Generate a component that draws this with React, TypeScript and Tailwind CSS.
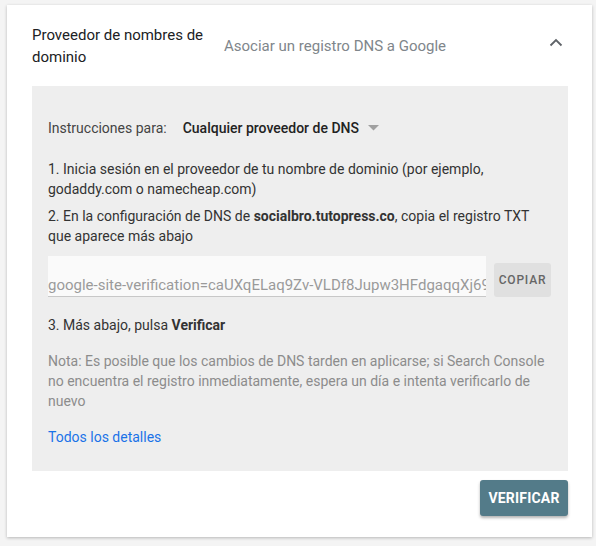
import React from 'react'

export default function App() {
  return (
    <div className="w-[596px] h-[546px] bg-[#f4f4f4] pt-[5px] pl-[7px] font-['Roboto',sans-serif]">
      <div className="w-[585px] h-[532px] bg-white shadow-[0_1px_3px_rgba(0,0,0,0.25)] pl-[25px] pr-[24px] pt-[19px]">

        {/* Header */}
        <div className="flex items-start">
          <div className="w-[192px] text-[15px] leading-[22px] text-[#202124]">
            Proveedor de nombres de dominio
          </div>
          <div className="flex-1 pt-[11px] text-[15px] leading-[22px] text-[#80868b]">
            Asociar un registro DNS a Google
          </div>
          <div className="pt-[14px] pr-[5px]">
            <svg width="14" height="9" viewBox="0 0 14 9">
              <path d="M1.5 7.5 L7 2 L12.5 7.5" stroke="#5f6368" strokeWidth="1.8" fill="none" />
            </svg>
          </div>
        </div>

        {/* Panel */}
        <div className="mt-[18px] bg-[#eeeeee] px-[16px] pt-[32px] pb-[24px] text-[14px] leading-[20px] text-[#333]">
          <div className="flex items-center">
            <span className="text-[#444]">Instrucciones para:</span>
            <span className="ml-[16px] font-medium text-[#222]">Cualquier proveedor de DNS</span>
            <svg className="ml-[9px]" width="11" height="6" viewBox="0 0 11 6">
              <path d="M0 0 L11 0 L5.5 5.5 Z" fill="#a0a0a0" />
            </svg>
          </div>

          <p className="mt-[21px]">
            1. Inicia sesión en el proveedor de tu nombre de dominio (por ejemplo, godaddy.com o namecheap.com)
          </p>
          <p className="mt-[7px]">
            2. En la configuración de DNS de <b className="font-bold">socialbro.tutopress.co</b>, copia el registro TXT que aparece más abajo
          </p>

          <div className="mt-[10px] flex items-end gap-[8px]">
            <div className="w-[438px] h-[41px] shrink-0 bg-[#fafafa] border-b border-[#c8c8c8] overflow-hidden flex items-end">
              <span className="whitespace-nowrap text-[15px] leading-[22px] pb-0 text-[#9a9a9a]">
                google-site-verification=caUXqELaq9Zv-VLDf8Jupw3HFdgaqqXj69Kk0Jb1
              </span>
            </div>
            <button className="w-[57px] h-[34px] shrink-0 bg-[#e0e0e0] rounded-[3px] text-[12px] font-medium tracking-[0.8px] text-[#666] flex items-center justify-center">
              COPIAR
            </button>
          </div>

          <p className="mt-[18px]">
            3. Más abajo, pulsa <b className="font-bold">Verificar</b>
          </p>

          <p className="mt-[16px] text-[#8c8c8c]">
            Nota: Es posible que los cambios de DNS tarden en aplicarse; si Search Console no encuentra el registro inmediatamente, espera un día e intenta verificarlo de nuevo
          </p>

          <a href="#" className="block mt-[16px] text-[#1a73e8]">Todos los detalles</a>
        </div>

        {/* Footer */}
        <div className="flex justify-end mt-[9px]">
          <button className="w-[88px] h-[36px] bg-[#537b89] rounded-[3px] text-white text-[14px] font-bold tracking-[0.2px] shadow-[0_2px_3px_rgba(0,0,0,0.3)]">
            VERIFICAR
          </button>
        </div>
      </div>
    </div>
  )
}
